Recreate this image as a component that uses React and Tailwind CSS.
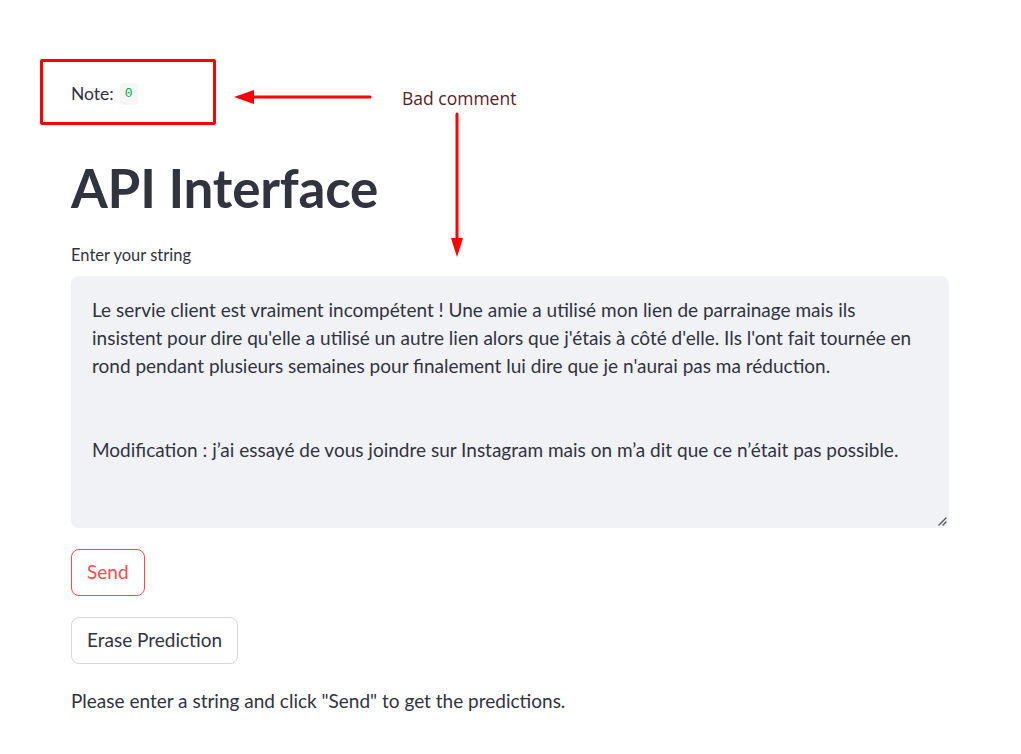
import React from "react";

const font = { fontFamily: "Lato, 'Noto Sans', sans-serif" };

export default function App() {
  return (
    <div className="relative w-[1021px] h-[754px] bg-white text-[#31333f] overflow-hidden" style={font}>
      <div className="flex flex-col pl-[71px] pt-[83px] w-[949px]">
        <div className="flex items-center h-[22px] gap-[6px] text-[17.5px]">
          <span>Note:</span>
          <code className="flex items-center justify-center h-[22px] w-[18px] rounded-[4px] bg-[#f5f6f8] text-[13px] text-[#09ab3b] font-['Liberation_Mono',monospace]">0</code>
        </div>
        <h1 className="mt-[51px] text-[53px] leading-[64px] font-bold tracking-[-0.2px] text-[#31333f]">API Interface</h1>
        <label className="mt-[25px] text-[16.5px] leading-[20px]">Enter your string</label>
        <div className="relative mt-[11px] h-[252px] rounded-[8px] bg-[#f0f2f6] pl-[21px] pt-[20px] text-[19px] leading-[28px] text-[#31333f]">
          <div className="whitespace-nowrap">Le servie client est vraiment incompétent ! Une amie a utilisé mon lien de parrainage mais ils</div>
          <div className="whitespace-nowrap">insistent pour dire qu'elle a utilisé un autre lien alors que j'étais à côté d'elle. Ils l'ont fait tournée en</div>
          <div className="whitespace-nowrap">rond pendant plusieurs semaines pour finalement lui dire que je n'aurai pas ma réduction.</div>
          <div className="h-[28px]"></div>
          <div className="h-[28px]"></div>
          <div className="whitespace-nowrap">Modification : j’ai essayé de vous joindre sur Instagram mais on m’a dit que ce n’était pas possible.</div>
          <svg className="absolute right-[2px] bottom-[2px]" width="10" height="10" viewBox="0 0 10 10">
            <path d="M9 2 L2 9 M9 6 L6 9" stroke="#555" strokeWidth="1.4" strokeLinecap="round" />
          </svg>
        </div>
        <div className="mt-[21px]">
          <button className="h-[47px] px-[15px] rounded-[8px] border border-[#ff4b4b] text-[#ff4b4b] text-[19px] bg-white">Send</button>
        </div>
        <div className="mt-[21px]">
          <button className="h-[47px] px-[15px] rounded-[8px] border border-[#d5d6d9] text-[#31333f] text-[19px] bg-white">Erase Prediction</button>
        </div>
        <p className="mt-[24px] text-[19px] leading-[26px]">Please enter a string and click "Send" to get the predictions.</p>
      </div>

      <div className="absolute left-[40px] top-[59px] w-[176px] h-[66px] border-[3px] border-[#ff0000] rounded-[2px]"></div>
      <span className="absolute left-[402px] top-[85px] text-[17.5px] text-[#5b2525]" style={{ fontFamily: "'Open Sans', sans-serif" }}>Bad comment</span>
      <svg className="absolute left-0 top-0 pointer-events-none" width="1021" height="754">
        <line x1="370" y1="97" x2="250" y2="97" stroke="#ff0000" strokeWidth="3" strokeLinecap="round" />
        <polygon points="234,97 254,90 254,104" fill="#ff0000" />
        <line x1="457" y1="114" x2="457" y2="240" stroke="#ff0000" strokeWidth="3" strokeLinecap="round" />
        <polygon points="457,257 451,238 463,238" fill="#ff0000" />
      </svg>
    </div>
  );
}
